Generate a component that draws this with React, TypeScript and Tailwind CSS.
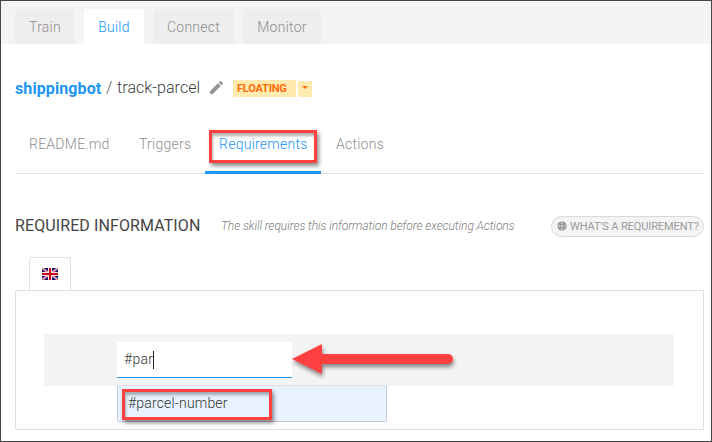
import React from "react";

const mainTabs = [
  { label: "Train", box: "w-[60px] bg-[#eeeeee] text-[#8f8f8f]" },
  { label: "Build", box: "w-[60px] bg-white text-[#2196f3]" },
  { label: "Connect", box: "w-[81px] bg-[#eeeeee] text-[#8f8f8f]" },
  { label: "Monitor", box: "w-[78px] bg-[#eeeeee] text-[#8f8f8f]" },
];

function Highlight({ className }: { className: string }) {
  return (
    <div
      className={`pointer-events-none absolute border-[3px] border-[#ff4040] shadow-[2px_3px_4px_rgba(0,0,0,0.45),inset_1px_3px_3px_rgba(0,0,0,0.3)] ${className}`}
    />
  );
}

function Flag() {
  return (
    <svg width="16" height="12" viewBox="0 0 16 12">
      <rect width="16" height="12" fill="#10106e" />
      <path d="M0 0L16 12M16 0L0 12" stroke="#f3dfe6" strokeWidth="2" />
      <path d="M0 0L16 12M16 0L0 12" stroke="#d8485c" strokeWidth="0.9" />
      <path d="M8 0V12M0 6H16" stroke="#f6e4e8" strokeWidth="4" />
      <path d="M8 0V12M0 6H16" stroke="#d0021b" strokeWidth="2" />
    </svg>
  );
}

export default function App() {
  return (
    <div className="h-[442px] w-[712px] overflow-hidden border border-[#464646] bg-white font-['Roboto',sans-serif] text-[14px] font-light leading-5 tracking-[0.25px] whitespace-nowrap">
      <nav className="flex h-[43px] items-end gap-[9px] bg-[#f4f4f4] pl-[14px]">
        {mainTabs.map((t) => (
          <div key={t.label} className={`flex h-[35px] items-center justify-center rounded-t-[2px] ${t.box}`}>
            {t.label}
          </div>
        ))}
      </nav>

      <div className="flex h-[88px] items-center pl-[14px] text-[16px]">
        <span className="mt-[2px] w-[91px] font-bold tracking-[0.1px] text-[#2196f3]">shippingbot</span>
        <span className="w-[11px] text-[#555]">/</span>
        <span className="w-[93px] tracking-[0.08px] text-[#3c3c3c]">track-parcel</span>
        <svg className="-mt-px" width="13" height="13" viewBox="3 3 18 18" fill="#939393">
          <path d="M3 17.25V21h3.75L17.81 9.94l-3.75-3.75L3 17.25zM20.71 7.04c.39-.39.39-1.02 0-1.41l-2.34-2.34a.996.996 0 0 0-1.41 0l-1.83 1.83 3.75 3.75 1.83-1.83z" />
        </svg>
        <span className="ml-[10px] flex h-[17px] w-[63px] items-center bg-[#ffeab0] pt-[1px] pl-[4px] text-[11px] font-bold tracking-[-0.2px] text-[#ff6d0a]">
          FLOATING
        </span>
        <span className="mt-px ml-[2px] flex h-4 w-[14px] items-center justify-center bg-[#ffeab0]">
          <svg className="-mt-[3px]" width="6" height="3" viewBox="0 0 6 3" fill="#ff6d0a"><path d="M0 0H6L3 3Z" /></svg>
        </span>
      </div>

      <div className="mr-[7px] ml-[14px] flex h-[42px] border-b border-[#e4e4e4] text-[#8f8f8f]">
        <span className="w-[110px] pt-[2px] pl-[14px]">README.md</span>
        <span className="w-[80px] pt-[2px] pl-[14px]">Triggers</span>
        <div className="relative h-[42px] w-[116px] border-b-[3px] border-[#2196f3] pt-[2px] pl-[14px] text-[#2196f3]">
          Requirements
          <Highlight className="-top-[2px] left-[4px] h-[33px] w-[108px]" />
        </div>
        <span className="pt-[2px] pl-[15px]">Actions</span>
      </div>

      <div className="mt-[42px] mr-[7px] ml-[14px] flex h-[21px] items-center">
        <h2 className="-mt-[2px] w-[206px] text-[16px] font-normal tracking-[0.1px] text-[#444]">REQUIRED INFORMATION</h2>
        <p className="-mt-px text-[12px] tracking-[-0.08px] text-[#808080] italic">The skill requires this information before executing Actions</p>
        <button className="ml-auto flex h-[21px] w-[153px] items-center gap-[3px] rounded-full border border-[#d9d9d9] bg-[#f4f4f4] pl-[5px] text-[11px] font-normal tracking-[-0.1px] text-[#9b9b9b]">
          <svg className="-mt-[2px]" width="10" height="10" viewBox="0 0 10 10" fill="none" stroke="#929292">
            <circle cx="5" cy="5" r="4" strokeWidth="1.1" fill="#c4c4c4" />
            <circle cx="5" cy="5" r="1.5" strokeWidth="1" fill="#eeeeee" />
            <path d="M2 2l2 2M8 2L6 4M2 8l2-2M8 8L6 6" strokeWidth="1.7" />
          </svg>
          <span>WHAT'S A REQUIREMENT?</span>
        </button>
      </div>

      <div className="mt-5 ml-[28px] flex h-[33px] w-[42px] items-center justify-center rounded-t-[2px] border border-b-0 border-[#e0e0e0]">
        <Flag />
      </div>
      <main className="mr-[7px] ml-[14px] h-[140px] border border-[#dedede] pt-[43px] pl-[28px]">
        <div className="relative h-[52px] w-[630px] bg-[#f4f4f4] pt-2 pl-[73px]">
          <div className="flex h-9 w-[175px] items-center border-b border-[#2196f3] bg-white pl-[7px] text-[#333]">
            <span className="-mt-px">#par</span><span className="h-[18px] w-px bg-[#222]" />
          </div>
          <div className="absolute top-[51px] left-[73px] h-[37px] w-[270px] rounded-b-[2px] border border-[#c7cbd2] border-t-[#dcdfe3] bg-[#e9f3ff] pt-[7px] pl-[10px] text-[#333]">
            <span className="tracking-[0.18px]">#parcel-number</span>
            <Highlight className="top-[3px] left-[4px] h-[31px] w-[150px]" />
          </div>
          <svg className="absolute top-0 left-[240px] drop-shadow-[1px_3px_2px_rgba(0,0,0,0.45)]" width="180" height="52" fill="#ff4040">
            <path d="M8 25L38 10V20H164a5 5 0 0 1 0 10H38V40Z" />
          </svg>
        </div>
      </main>
    </div>
  );
}
